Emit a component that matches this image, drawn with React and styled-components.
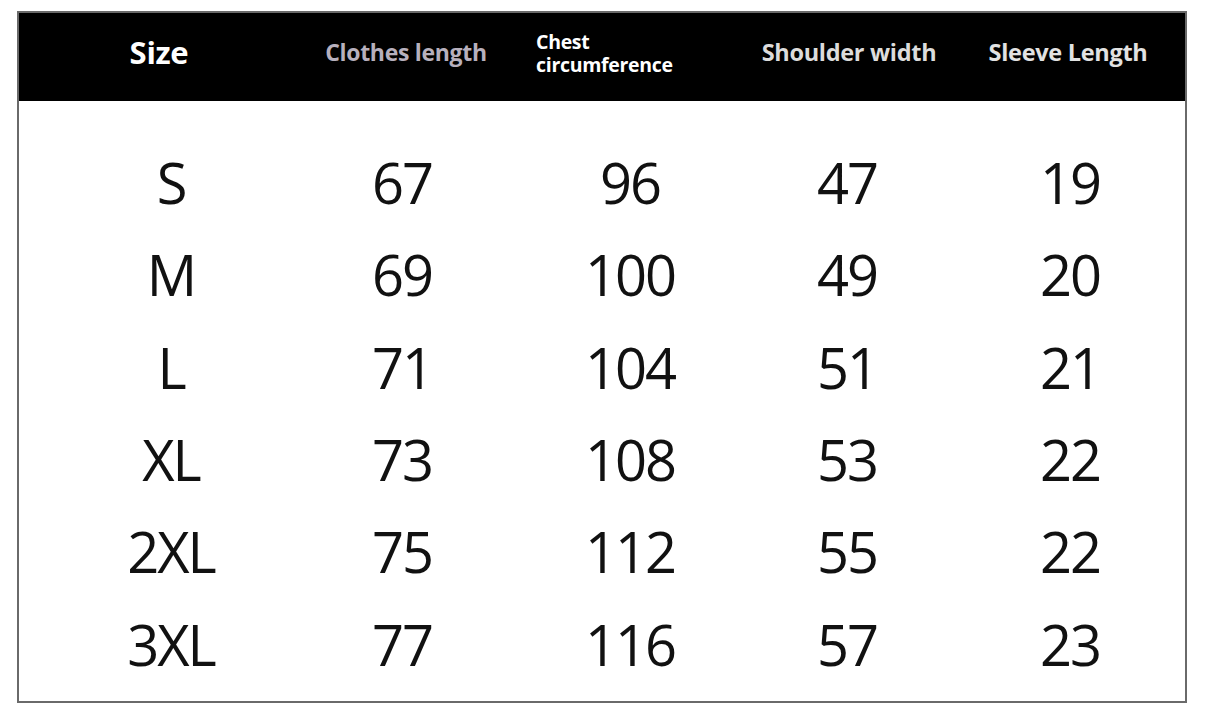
import React from "react"
import styled, { createGlobalStyle } from "styled-components"

const GlobalStyle = createGlobalStyle`
  html, body {
    margin: 0;
    padding: 0;
    background: #fff;
  }
  body {
    font-family: "Open Sans", "Liberation Sans", sans-serif;
  }
`

const headers = [
  { label: "Size", color: "#ffffff", size: 31 },
  { label: "Clothes length", color: "#b7b0bd", size: 23 },
  { label: ["Chest", "circumference"], color: "#ffffff", size: 19.5, stacked: true },
  { label: "Shoulder width", color: "#dcdcdc", size: 23.5 },
  { label: "Sleeve Length", color: "#e2e2e2", size: 23.5 },
]

const rows = [
  ["S", 67, 96, 47, 19],
  ["M", 69, 100, 49, 20],
  ["L", 71, 104, 51, 21],
  ["XL", 73, 108, 53, 22],
  ["2XL", 75, 112, 55, 22],
  ["3XL", 77, 116, 57, 23],
]

const SizeChart = () => (
  <Page>
    <Table>
      <HeaderBar>
        {headers.map((h, i) => (
          <HeadCell key={i} $color={h.color} $size={h.size} $stacked={h.stacked}>
            {h.stacked ? (
              <Stack>
                {h.label.map((l) => <span key={l}>{l}</span>)}
              </Stack>
            ) : h.label}
          </HeadCell>
        ))}
      </HeaderBar>
      <Body>
        {rows.map((row) => (
          <Row key={row[0]}>
            {row.map((v, i) => <Cell key={i}>{v}</Cell>)}
          </Row>
        ))}
      </Body>
    </Table>
  </Page>
)

const Page = styled.div`
  padding: 11px 0 0 17px;
`

const Table = styled.div`
  width: 1170px;
  height: 692px;
  box-sizing: border-box;
  border: 2px solid #6a6a6a;
  display: flex;
  flex-direction: column;
`

const HeaderBar = styled.div`
  height: 88px;
  box-sizing: border-box;
  background: #000;
  display: grid;
  grid-template-columns: 280px 214px 182px 308px 130px;
  align-items: center;
  padding-bottom: 10px;
`

const HeadCell = styled.div`
  display: flex;
  justify-content: ${(p) => (p.$stacked ? "flex-start" : "center")};
  padding-left: ${(p) => (p.$stacked ? "23px" : "0")};
  white-space: nowrap;
  color: ${(p) => p.$color};
  font-size: ${(p) => p.$size}px;
  font-weight: 700;
  letter-spacing: -0.3px;
`

const Stack = styled.div`
  display: flex;
  flex-direction: column;
  line-height: 23px;
  margin-top: 2px;
`

const Body = styled.div`
  flex: 1;
  padding: 35px 0 0 39px;
`

const Row = styled.div`
  display: grid;
  grid-template-columns: 226px 236px 220px 214px 232px;
  height: 92.3px;
  align-items: center;
`

const Cell = styled.div`
  text-align: center;
  font-size: 56px;
  color: #111;
  letter-spacing: -2px;
`

const App = () => (
  <>
    <GlobalStyle />
    <SizeChart />
  </>
)

export default App
